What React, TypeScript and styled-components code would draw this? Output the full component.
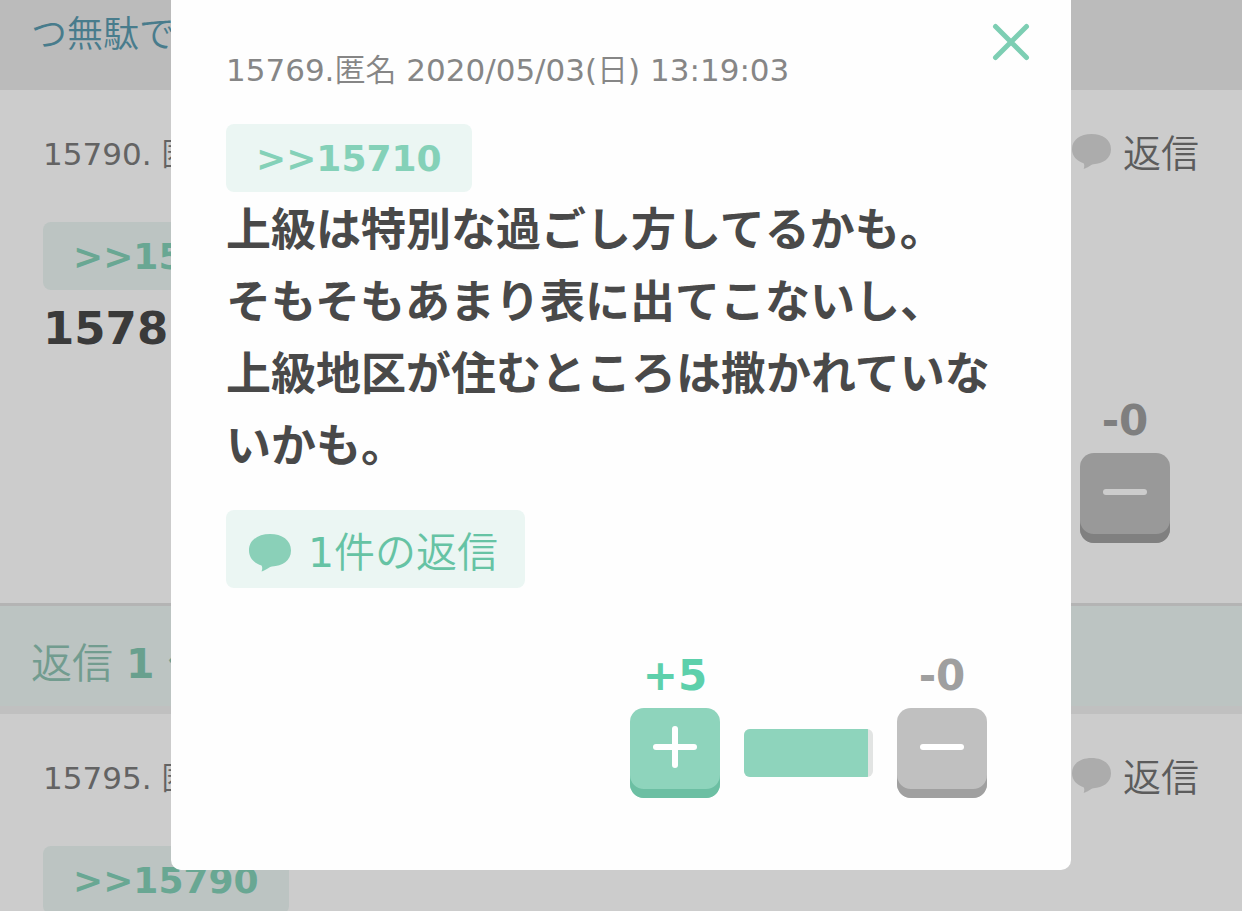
import React from "react";
import styled, { createGlobalStyle } from "styled-components";

const mint = "#8ed4bc";
const mintPale = "#ebf6f3";

const GlobalStyle = createGlobalStyle`
  *, *::before, *::after { box-sizing: border-box; }
  body {
    margin: 0;
    background: #fff;
    font-family: "DejaVu Sans", "Noto Sans CJK JP", sans-serif;
  }
  button { font-family: inherit; border: 0; cursor: pointer; }
  a { text-decoration: none; }
`;

const Page = styled.div`
  position: relative;
  height: 100vh;
  overflow: hidden;
`;

const RelatedBar = styled.nav`
  height: 90px;
  padding: 7px 31px;
  background: #eaeaea;
`;

const RelatedLink = styled.a`
  font-size: 36px;
  font-weight: 350;
  line-height: 56px;
  color: #5a9bb0;
`;

const Post = styled.article`
  padding: 36px 43px 60px;
`;

const PostHeader = styled.header`
  display: flex;
  justify-content: space-between;
  align-items: center;
  height: 56px;
  margin-bottom: 40px;
`;

const Meta = styled.p<{ $tone: string }>`
  margin: 0;
  font-size: 31px;
  line-height: 40px;
  color: ${(p) => p.$tone};
`;

const ReplyLink = styled.a`
  display: flex;
  align-items: center;
  gap: 12px;
  font-size: 38px;
  font-weight: 350;
  line-height: 56px;
  color: #747474;

  svg { margin-bottom: 4px; }
`;

const QuoteLink = styled.a`
  display: block;
  width: fit-content;
  padding: 2px 30px 0;
  border-radius: 8px;
  background: ${mintPale};
  font-size: 36px;
  font-weight: 700;
  line-height: 66px;
  color: #84d1b8;
`;

const Comment = styled.p`
  margin: 3px 0 0;
  font-size: 45px;
  font-weight: 700;
  line-height: 72px;
  color: #494949;
`;

const Votes = styled.div<{ $gap: number }>`
  display: flex;
  justify-content: flex-end;
  align-items: flex-end;
  gap: 24px;
  margin-top: ${(p) => p.$gap}px;
  padding-right: 29px;
`;

const Vote = styled.div<{ $tone: string }>`
  display: flex;
  flex-direction: column;
  align-items: center;
  gap: 8px;
  width: 90px;
  font-size: 42px;
  font-weight: 700;
  line-height: 48px;
  color: ${(p) => p.$tone};
`;

const VoteButton = styled.button<{ $face: string; $edge: string }>`
  display: flex;
  justify-content: center;
  width: 90px;
  height: 90px;
  padding: 16px 0 0;
  border-radius: 14px;
  background: ${(p) => p.$face};
  box-shadow: inset 0 -9px 0 ${(p) => p.$edge};
`;

const Ratio = styled.div`
  width: 129px;
  height: 48px;
  margin-bottom: 21px;
  border-radius: 6px;
  background: #e2e4e3;
  overflow: hidden;
`;

const RatioFill = styled.div`
  height: 100%;
  background: ${mint};
`;

const RepliesHeading = styled.h2`
  margin: 0;
  padding: 16px 31px 0;
  border-top: 3px solid #e2e2e2;
  border-bottom: 8px solid #f0f0f0;
  background: ${mintPale};
  font-size: 41px;
  font-weight: 350;
  line-height: 84px;
  color: #8fc4b3;

  b { font-weight: 700; color: #84c9b2; }
`;

const Overlay = styled.div`
  position: absolute;
  inset: 0;
  display: flex;
  justify-content: center;
  align-items: flex-start;
  background: rgba(0, 0, 0, 0.2);
`;

const Dialog = styled.section`
  position: relative;
  width: 100%;
  max-width: 900px;
  padding: 50px 55px 72px;
  border-radius: 0 0 10px 10px;
  background: #fefefe;
`;

const DialogQuote = styled(QuoteLink)`
  margin-top: 34px;
`;

const CloseButton = styled.button`
  position: absolute;
  top: 22px;
  right: 40px;
  width: 40px;
  height: 40px;
  padding: 0;
  background: none;

  svg { display: block; }
`;

const RepliesButton = styled.button`
  display: flex;
  align-items: center;
  gap: 17px;
  height: 78px;
  margin-top: 27px;
  padding: 8px 27px 0 23px;
  border-radius: 8px;
  background: ${mintPale};
  font-size: 41px;
  line-height: 70px;
  color: #66c3a4;
`;

const Light = styled.span`
  font-weight: 350;
`;

function Bubble({ width, color }: { width: number; color: string }) {
  return (
    <svg width={width} viewBox="0 0 42 38" fill={color} aria-hidden="true">
      <path d="M21 0C33 0 42 6 42 16.500C42 27 33 32 23 32.500C20 33 17 36.500 12.500 37.500C13.500 35 13.500 33 12.500 31.500C5 29 0 24 0 16.500C0 6 9 0 21 0Z" />
    </svg>
  );
}

function Sign({ plus }: { plus?: boolean }) {
  return (
    <svg width="46" height="46" viewBox="0 0 46 46" stroke="#fff" strokeWidth="6" strokeLinecap="round" aria-hidden="true">
      <path d="M4 23H42" />
      {plus && <path d="M23 5V41" />}
    </svg>
  );
}

function MinusVote() {
  return (
    <Vote $tone="#9f9f9f">
      <span>-0</span>
      <VoteButton type="button" aria-label="マイナス" $face="#c0c0c0" $edge="#a0a0a0">
        <Sign />
      </VoteButton>
    </Vote>
  );
}

function ThreadPost({ id, quote, children }: { id: string; quote: string; children?: React.ReactNode }) {
  return (
    <Post>
      <PostHeader>
        <Meta $tone="#7c7c7c">
          {id}. <Light>匿名</Light>
        </Meta>
        <ReplyLink href="#reply">
          <Bubble width={39} color="#d8d8d8" />
          返信
        </ReplyLink>
      </PostHeader>
      <QuoteLink href="#quote">&gt;&gt;{quote}</QuoteLink>
      {children}
    </Post>
  );
}

export default function App() {
  const plus = 96;
  return (
    <>
      <GlobalStyle />
      <Page lang="ja">
        <RelatedBar>
          <RelatedLink href="#related">つ無駄で</RelatedLink>
        </RelatedBar>
        <ThreadPost id="15790" quote="157">
          <Comment>1578</Comment>
          <Votes $gap={32}>
            <MinusVote />
          </Votes>
        </ThreadPost>
        <RepliesHeading>
          返信 <b>1</b> 件
        </RepliesHeading>
        <ThreadPost id="15795" quote="15790" />

        <Overlay>
          <Dialog role="dialog" aria-label="コメント">
            <CloseButton type="button" aria-label="閉じる">
              <svg width="40" height="40" viewBox="0 0 40 40" stroke="#7dceb3" strokeWidth="5" strokeLinecap="round">
                <path d="M4.500 4.500L35.500 35.500M35.500 4.500L4.500 35.500" />
              </svg>
            </CloseButton>
            <Meta $tone="#868686">
              15769.<Light>匿名</Light> 2020/05/03(<Light>日</Light>) 13:19:03
            </Meta>
            <DialogQuote href="#quote">&gt;&gt;15710</DialogQuote>
            <Comment>
              上級は特別な過ごし方してるかも。
              <br />
              そもそもあまり表に出てこないし、
              <br />
              上級地区が住むところは撒かれていないかも。
            </Comment>
            <RepliesButton type="button">
              <Bubble width={42} color="#8ad0b8" />
              <span>
                1<Light>件の返信</Light>
              </span>
            </RepliesButton>
            <Votes $gap={64}>
              <Vote $tone="#5dd0ab">
                <span>+5</span>
                <VoteButton type="button" aria-label="プラス" $face={mint} $edge="#6cbfa3">
                  <Sign plus />
                </VoteButton>
              </Vote>
              <Ratio>
                <RatioFill style={{ width: `${plus}%` }} />
              </Ratio>
              <MinusVote />
            </Votes>
          </Dialog>
        </Overlay>
      </Page>
    </>
  );
}
